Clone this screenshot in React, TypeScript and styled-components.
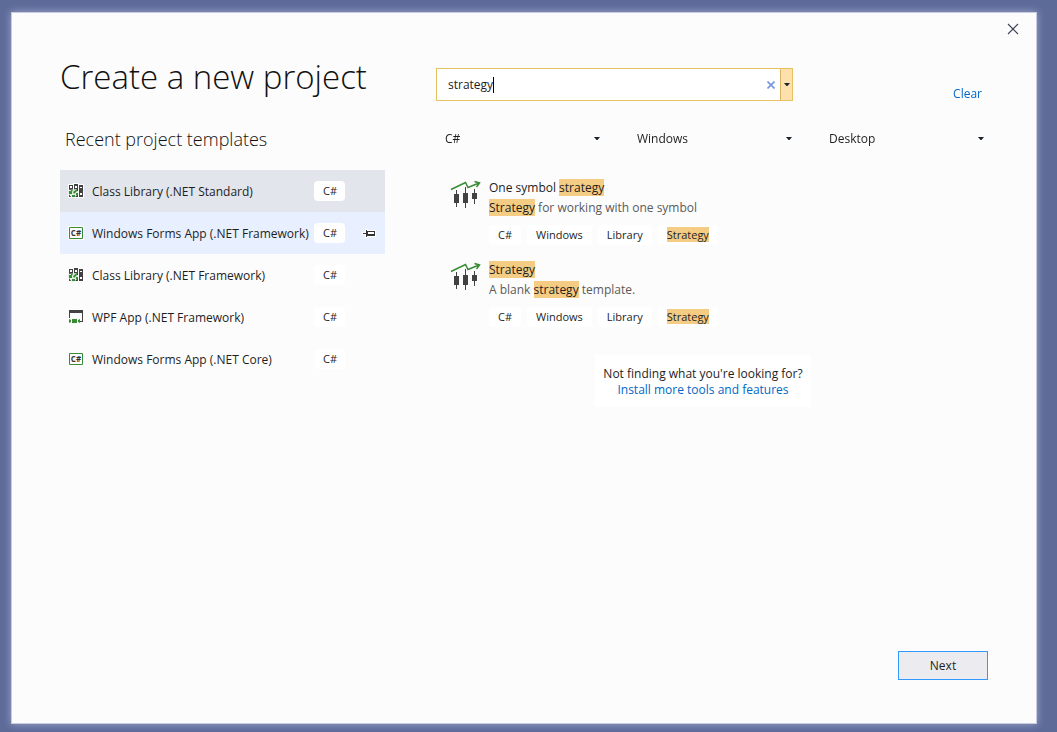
import React, { useState } from "react";
import styled, { createGlobalStyle } from "styled-components";

const GlobalStyle = createGlobalStyle`
  *, *::before, *::after { box-sizing: border-box; }
  body {
    margin: 0;
    background: #5d6b99;
    color: #1e1e1e;
    font-family: "Open Sans", "Noto Sans", sans-serif;
    font-size: 12px;
    line-height: 16px;
  }
  button, input, select { font: inherit; color: inherit; }
`;

const Page = styled.div`
  display: flex;
  min-height: 100vh;
  padding: 12px 20px 8px 11px;
`;

const Dialog = styled.main`
  flex: 1;
  display: flex;
  flex-direction: column;
  background: #fcfcfc;
  border: 1px solid #c8cbe0;
  box-shadow: 0 0 8px #a0a8cc;
`;

const TitleBar = styled.div`
  display: flex;
  justify-content: flex-end;
  padding: 0 6px 2px 0;
`;

const IconButton = styled.button<{ $width: number; $height: number }>`
  display: flex;
  flex: none;
  align-items: center;
  justify-content: center;
  width: ${(p) => p.$width}px;
  height: ${(p) => p.$height}px;
  padding: 0;
  border: 0;
  background: transparent;
`;

const Columns = styled.div`
  flex: 1;
  display: grid;
  grid-template-columns: 325px minmax(0, 1fr);
  gap: 51px;
  padding: 0 48px;
`;

const Recent = styled.section`
  padding-top: 9px;
`;

const Title = styled.h1`
  margin: 0;
  color: #111;
  font-size: 33px;
  font-weight: 350;
  line-height: 44px;
  white-space: nowrap;
`;

const SubTitle = styled.h2`
  margin: 26px 0 17px;
  padding-left: 5px;
  color: #111;
  font-size: 18px;
  font-weight: 350;
  line-height: 28px;
`;

const List = styled.ul`
  margin: 0;
  padding: 0;
  list-style: none;
`;

const RecentRow = styled.li<{ $background?: string }>`
  display: grid;
  grid-template-columns: 16px minmax(0, 1fr) 31px 24px;
  align-items: center;
  column-gap: 8px;
  height: 42px;
  padding: 0 8px;
  background: ${(p) => p.$background ?? "transparent"};
`;

const RecentName = styled.span`
  padding-top: 2px;
  white-space: nowrap;
`;

const Tag = styled.span`
  padding: 2px 9px;
  border-radius: 4px;
  background: #fff;
  font-size: 11px;
  text-align: center;
  white-space: nowrap;
`;

const Browse = styled.section`
  padding-top: 22px;
`;

const SearchRow = styled.div`
  display: flex;
  justify-content: space-between;
`;

const SearchBox = styled.div`
  display: flex;
  width: 357px;
  height: 33px;
  border: 1px solid #e5c365;
  background: #fff;
`;

const SearchField = styled.div`
  flex: 1;
  min-width: 0;
  display: grid;
  align-items: center;
  overflow: hidden;
  & > * { grid-area: 1 / 1; }
`;

const SearchInput = styled.input`
  width: 100%;
  height: 31px;
  padding: 0 0 0 11px;
  border: 0;
  outline: 0;
  background: transparent;
  caret-color: transparent;
`;

/* Steady insertion bar placed after the typed text. */
const Caret = styled.span`
  justify-self: start;
  margin-left: 11px;
  border-right: 1px solid #000;
  color: transparent;
  white-space: pre;
  pointer-events: none;
  user-select: none;
  &::before { content: attr(data-text); }
`;

const HistoryButton = styled.button`
  display: flex;
  align-items: center;
  justify-content: center;
  width: 12px;
  padding: 0;
  border: 0;
  border-left: 1px solid #d9b566;
  background: #fde0ac;
`;

const Link = styled.a`
  color: #0067c8;
  text-decoration: none;
`;

const ClearLink = styled(Link)`
  align-self: flex-end;
  padding-top: 18px;
  margin-right: 6px;
`;

const Filters = styled.div`
  display: grid;
  grid-template-columns: repeat(3, minmax(0, 1fr));
  gap: 24px;
  margin-top: 25px;
`;

const Filter = styled.label`
  display: grid;
  align-items: center;
  & > * { grid-area: 1 / 1; }
  & > svg { justify-self: end; margin-right: 4px; pointer-events: none; }
`;

const FilterSelect = styled.select`
  appearance: none;
  width: 100%;
  height: 24px;
  padding: 0 16px 0 9px;
  border: 0;
  background: transparent;
`;

const Results = styled.ul`
  display: grid;
  gap: 16px;
  margin: 28px 18px 0 0;
  padding: 0 0 0 14px;
  list-style: none;
`;

const Result = styled.li`
  display: grid;
  grid-template-columns: 31px 1fr;
  column-gap: 8px;
`;

const ResultName = styled.div`
  padding-top: 1px;
  margin-bottom: 4px;
`;

const Description = styled.div`
  margin-bottom: 9px;
  color: #5a5a5a;
`;

const Tags = styled.div`
  display: flex;
  gap: 6px;
`;

const Mark = styled.mark`
  background: #f5cc84;
  color: #1e1e1e;
`;

const NotFound = styled.div`
  width: fit-content;
  margin: 28px auto 0;
  padding: 11px 8px 9px;
  background: #fff;
  text-align: center;
`;

const NotFoundArea = styled.div`
  padding-right: 18px;
`;

const Footer = styled.footer`
  display: flex;
  justify-content: flex-end;
  padding: 0 48px 43px;
`;

const NextButton = styled.button`
  width: 90px;
  height: 29px;
  border: 1px solid #3399ff;
  background: #ececf0;
`;

const Arrow = () => (
  <svg width="6" height="4" viewBox="0 0 6 4" aria-hidden="true">
    <path d="M0 0h6L3.500 3h-1z" fill="#1b2430" />
  </svg>
);

const LibraryIcon = () => (
  <svg width="16" height="16" viewBox="0 0 16 16" aria-hidden="true">
    <path d="M0 1h5V0h6v1h5v14H0z" fill="#fff" />
    <path d="M1 2h4v12H1zM6 1h4v13H6zM11 2h4v12h-4z" fill="#424242" />
    <path d="M2 3h2v2H2zM7 3h2v2H7zM12 4h2v1h-2zM12 10h2v2h-2zM2 11h1v2H2z" fill="#fff" />
    <path d="M0 7l10-1v5l-4 4H4L0 10z" fill="#e4eee4" />
    <path d="M1 8h3v3H1zM3 6.500l2 1-2 2zM5 9l4-3 1 1-4 4zM4 12h3v2H4zM8 10h2v2H8z" fill="#388a34" />
    <path d="M9 6h1v2H9zM8 13h2v1H8z" fill="#424242" />
  </svg>
);

const FormsIcon = () => (
  <svg width="16" height="16" viewBox="0 0 16 16" aria-hidden="true">
    <path d="M0 1h16v14H0z" fill="#fff" />
    <path d="M1.500 2.500h13v11h-13z" fill="#fff" stroke="#388a34" />
    <text x="8" y="11" textAnchor="middle" fontFamily="Open Sans, sans-serif" fontSize="8" fontWeight="700" fill="#333">
      C#
    </text>
  </svg>
);

const WpfIcon = () => (
  <svg width="16" height="16" viewBox="0 0 16 16" aria-hidden="true">
    <path d="M1 1h14v12h-3v-1h2V4H2v5H1z" fill="#424242" />
    <path d="M4 10h5v4H4zM1 10l2 1v2l-2 1zM10 11l2-1v4l-2-1z" fill="#388a34" />
  </svg>
);

const PinIcon = () => (
  <svg width="14" height="9" viewBox="0 0 14 9" aria-hidden="true">
    <path d="M0 3h3V0h3v1h8v7H6v1H3V6H0z" fill="#fff" />
    <path d="M1 4h3V1h1v1h8v5H5v1H4V5H1zM6 3v2h6V3z" fill="#333" fillRule="evenodd" />
  </svg>
);

const StrategyIcon = () => (
  <svg width="31" height="30" viewBox="0 1 31 30" aria-hidden="true">
    <path d="M1 11.500L15.500 4.500L18 9.500L29 5M24.500 3.500L29.500 5L26.500 9" fill="none" stroke="#388a34" strokeWidth="1.500" />
    <path d="M6.500 12v17M15.500 9v21M24.500 11v15" stroke="#424242" />
    <path d="M4 16h5v9H4zM13 15h5v10h-5zM22 15h5v6h-5z" fill="#424242" />
  </svg>
);

const recentTemplates = [
  { name: "Class Library (.NET Standard)", icon: <LibraryIcon />, background: "#e2e5ec" },
  { name: "Windows Forms App (.NET Framework)", icon: <FormsIcon />, background: "#e8effe", pin: true },
  { name: "Class Library (.NET Framework)", icon: <LibraryIcon /> },
  { name: "WPF App (.NET Framework)", icon: <WpfIcon /> },
  { name: "Windows Forms App (.NET Core)", icon: <FormsIcon /> },
];

const filters = [
  { label: "Language", value: "C#" },
  { label: "Platform", value: "Windows" },
  { label: "Project type", value: "Desktop" },
];

const results = [
  { name: "One symbol strategy", description: "Strategy for working with one symbol" },
  { name: "Strategy", description: "A blank strategy template." },
];

const resultTags = ["C#", "Windows", "Library", "Strategy"];

const Highlight = ({ text }: { text: string }) => (
  <>
    {text.split(/(strategy)/i).map((part, i) =>
      i % 2 ? <Mark key={i}>{part}</Mark> : <React.Fragment key={i}>{part}</React.Fragment>
    )}
  </>
);

export default function App() {
  const [query, setQuery] = useState("strategy");
  return (
    <Page>
      <GlobalStyle />
      <Dialog>
        <TitleBar>
          <IconButton $width={34} $height={31} aria-label="Close">
            <svg width="12" height="12" viewBox="0 0 12 12" aria-hidden="true">
              <path d="M1 1l10 10M11 1L1 11" stroke="#3b4058" strokeWidth="1.100" />
            </svg>
          </IconButton>
        </TitleBar>
        <Columns>
          <Recent>
            <Title>Create a new project</Title>
            <SubTitle>Recent project templates</SubTitle>
            <List>
              {recentTemplates.map((t) => (
                <RecentRow key={t.name} $background={t.background}>
                  {t.icon}
                  <RecentName>{t.name}</RecentName>
                  <Tag>C#</Tag>
                  {t.pin && (
                    <IconButton $width={32} $height={24} aria-label="Pin template">
                      <PinIcon />
                    </IconButton>
                  )}
                </RecentRow>
              ))}
            </List>
          </Recent>
          <Browse>
            <SearchRow>
              <SearchBox>
                <SearchField>
                  <SearchInput
                    aria-label="Search for templates"
                    value={query}
                    autoFocus
                    onChange={(e) => setQuery(e.target.value)}
                  />
                  <Caret data-text={query} aria-hidden="true" />
                </SearchField>
                <IconButton $width={18} $height={31} aria-label="Clear search" onClick={() => setQuery("")}>
                  <svg width="8" height="8" viewBox="0 0 8 8" aria-hidden="true">
                    <path d="M0.500 0.500l7 7M7.500 0.500l-7 7" stroke="#7795dd" strokeWidth="1.600" />
                  </svg>
                </IconButton>
                <HistoryButton aria-label="Search history">
                  <Arrow />
                </HistoryButton>
              </SearchBox>
              <ClearLink href="#clear">Clear</ClearLink>
            </SearchRow>
            <Filters>
              {filters.map((f) => (
                <Filter key={f.label}>
                  <FilterSelect aria-label={f.label} defaultValue={f.value}>
                    <option>{f.value}</option>
                  </FilterSelect>
                  <Arrow />
                </Filter>
              ))}
            </Filters>
            <Results>
              {results.map((r) => (
                <Result key={r.name}>
                  <StrategyIcon />
                  <div>
                    <ResultName>
                      <Highlight text={r.name} />
                    </ResultName>
                    <Description>
                      <Highlight text={r.description} />
                    </Description>
                    <Tags>
                      {resultTags.map((tag) => (
                        <Tag key={tag}>
                          <Highlight text={tag} />
                        </Tag>
                      ))}
                    </Tags>
                  </div>
                </Result>
              ))}
            </Results>
            <NotFoundArea>
              <NotFound>
                <div>Not finding what you're looking for?</div>
                <Link href="#install">Install more tools and features</Link>
              </NotFound>
            </NotFoundArea>
          </Browse>
        </Columns>
        <Footer>
          <NextButton>Next</NextButton>
        </Footer>
      </Dialog>
    </Page>
  );
}
